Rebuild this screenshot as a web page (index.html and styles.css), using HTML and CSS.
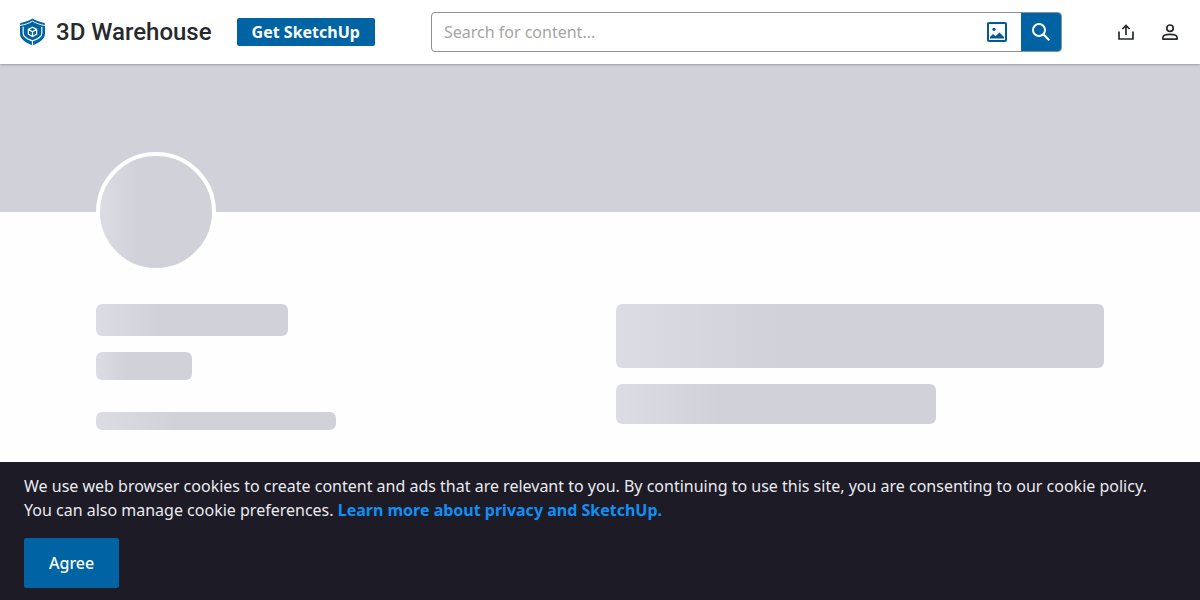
FILE: index.html
```html
<!DOCTYPE html>
<html lang="en">
<head>
  <meta charset="utf-8">
  <meta name="viewport" content="width=device-width, initial-scale=1">
  <title>3D Warehouse</title>
  <link rel="stylesheet" href="styles.css">
</head>
<body>
  <header class="header">
    <a class="logo" href="#">
      <svg class="logo-mark" viewBox="0 0 26 28" aria-hidden="true">
        <path fill="#0063a3" d="M13 0c3.500 2.200 7.200 3.600 11.500 4.300.9.200 1.500.8 1.500 1.700v9.500c0 5.500-5 9.300-13 12.500C5 24.800 0 21 0 15.500V6c0-.9.600-1.500 1.500-1.700C5.800 3.600 9.500 2.200 13 0z"/>
        <path fill="none" stroke="#fff" stroke-width="1" d="M0 7.200C5 6.400 9.300 5 13 2.700c3.700 2.300 8 3.700 13 4.500"/>
        <path fill="none" stroke="#fff" stroke-width="1.200" d="M13 22.800V28M3.300 8.500v7c0 3.300 3.700 5.600 9.700 7.700 6-2.100 9.700-4.400 9.700-7.700v-7"/>
        <path fill="none" stroke="#fff" stroke-width="1.300" stroke-linejoin="round" d="M13 9l4.300 2.300v5L13 18.700l-4.300-2.400v-5zM8.700 11.300l4.300 2.400 4.300-2.400M13 13.700v5"/>
      </svg>
      <span class="logo-text">3D Warehouse</span>
    </a>
    <a class="get-link" href="#">Get SketchUp</a>
    <form class="search" role="search">
      <input class="search-input" type="text" placeholder="Search for content..." aria-label="Search for content">
      <button class="image-btn" type="button" aria-label="Search by image">
        <svg width="20" height="20" viewBox="0 0 20 20" aria-hidden="true">
          <rect x="1" y="1" width="18" height="18" rx="1" fill="none" stroke="#005a94" stroke-width="2"/>
          <circle cx="7" cy="7.300" r="1.600" fill="#005a94"/>
          <path fill="#005a94" d="M3 16.500V15l3-3 2.500 2.200 4-3.700 4.500 4.500v1.500z"/>
        </svg>
      </button>
      <button class="search-btn" type="submit" aria-label="Search">
        <svg width="20" height="20" viewBox="0 0 20 20" fill="none" stroke="#fff" stroke-width="2" aria-hidden="true">
          <circle cx="8" cy="8" r="6"/>
          <path d="M12.300 12.300l6 6"/>
        </svg>
      </button>
    </form>
    <nav class="actions" aria-label="Account">
      <button class="icon-btn" type="button" aria-label="Upload model">
        <svg width="16" height="16" viewBox="0 0 16 16" fill="none" stroke="#252a2e" stroke-width="1.700" aria-hidden="true">
          <path d="M1 7.500V15h14V7.500M8 11V2M4.500 5L8 1.500 11.500 5"/>
        </svg>
      </button>
      <button class="icon-btn" type="button" aria-label="Sign in">
        <svg width="16" height="16" viewBox="0 0 16 16" fill="none" stroke="#252a2e" stroke-width="1.700" aria-hidden="true">
          <circle cx="8" cy="4.200" r="3.200"/>
          <path stroke-linejoin="round" d="M.9 15.100v-1.700C.9 11.500 4 10.400 8 10.400s7.100 1.100 7.100 3v1.700z"/>
        </svg>
      </button>
    </nav>
  </header>

  <main aria-busy="true">
    <div class="cover"></div>
    <div class="profile">
      <div class="avatar shimmer"></div>
      <div class="columns">
        <div class="column">
          <div class="bar bar-name shimmer"></div>
          <div class="bar bar-type shimmer"></div>
          <div class="bar bar-stats shimmer"></div>
        </div>
        <div class="column">
          <div class="bar bar-about shimmer"></div>
          <div class="bar bar-links shimmer"></div>
        </div>
      </div>
    </div>
  </main>

  <section class="cookies" aria-label="Cookie notice">
    <p class="cookies-text">We use web browser cookies to create content and ads that are relevant to you. By continuing to use this site, you are consenting to our cookie policy. You can also manage cookie preferences. <a class="cookies-link" href="#">Learn more about privacy and SketchUp.</a></p>
    <button class="agree-btn" type="button">Agree</button>
  </section>
</body>
</html>
```

FILE: styles.css
```css
* {
  box-sizing: border-box;
}

body {
  margin: 0;
  background: #fefefe;
  color: #252a2e;
  font: 16px/24px "Noto Sans", sans-serif;
}

a {
  text-decoration: none;
}

button {
  display: flex;
  align-items: center;
  justify-content: center;
  padding: 0;
  border: 0;
  background: none;
  font: inherit;
  cursor: pointer;
}

svg {
  display: block;
}

/* Header */
.header {
  position: relative;
  display: flex;
  align-items: center;
  height: 64px;
  padding: 0 22px 0 20px;
  background: #fff;
  box-shadow: 0 1px 2px rgba(37, 42, 46, 0.3);
}

.logo {
  display: flex;
  align-items: center;
  gap: 11px;
  margin-right: 25px;
  color: #252a2e;
}

.logo-mark {
  width: 25px;
  height: 28px;
}

.logo-text {
  font: 500 24px/32px Roboto, sans-serif;
  white-space: nowrap;
}

.get-link {
  padding: 2px 15px;
  border-radius: 2px;
  background: #0063a3;
  color: #fff;
  font-weight: 700;
  white-space: nowrap;
}

.search {
  display: flex;
  flex: 1;
  height: 40px;
  margin: 0 56px;
  overflow: hidden;
  border: 1px solid #8f8e99;
  border-radius: 4px;
}

.search-input {
  flex: 1;
  min-width: 0;
  padding: 0 12px;
  border: 0;
  outline: 0;
  background: none;
  color: inherit;
  font: inherit;
}

.search-input::placeholder {
  color: #a5a5a5;
}

.image-btn {
  width: 48px;
}

.search-btn {
  width: 40px;
  background: #0063a3;
}

.actions {
  display: flex;
  gap: 28px;
}

.icon-btn {
  width: 16px;
  height: 16px;
}

/* Loading placeholders */
.cover {
  height: 148px;
  background: #d1d1da;
}

.shimmer {
  background: linear-gradient(90deg, #dcdce4, #d1d1da 33%);
}

.profile {
  padding: 0 96px;
}

.avatar {
  position: relative;
  width: 120px;
  height: 120px;
  margin-top: -60px;
  border: 4px solid #fff;
  border-radius: 50%;
}

.columns {
  display: grid;
  grid-template-columns: 1fr 1fr;
  gap: 32px;
  margin-top: 32px;
}

.bar {
  max-width: 100%;
  margin-bottom: 16px;
  border-radius: 6px;
}

.bar-name {
  width: 192px;
  height: 32px;
}

.bar-type {
  width: 96px;
  height: 28px;
  margin-bottom: 32px;
}

.bar-stats {
  width: 240px;
  height: 18px;
}

.bar-about {
  height: 64px;
}

.bar-links {
  width: 320px;
  height: 40px;
}

/* Cookie notice */
.cookies {
  position: fixed;
  right: 0;
  bottom: 0;
  left: 0;
  padding: 12px 24px;
  background: #1c1b26;
  color: #eaeaef;
}

.cookies-text {
  margin: 0 0 16px;
}

.cookies-link {
  color: #0f90f5;
  font-weight: 700;
}

.agree-btn {
  height: 50px;
  padding: 0 25px;
  border-radius: 2px;
  background: #0063a3;
  color: #fff;
  font-weight: 500;
}
```
